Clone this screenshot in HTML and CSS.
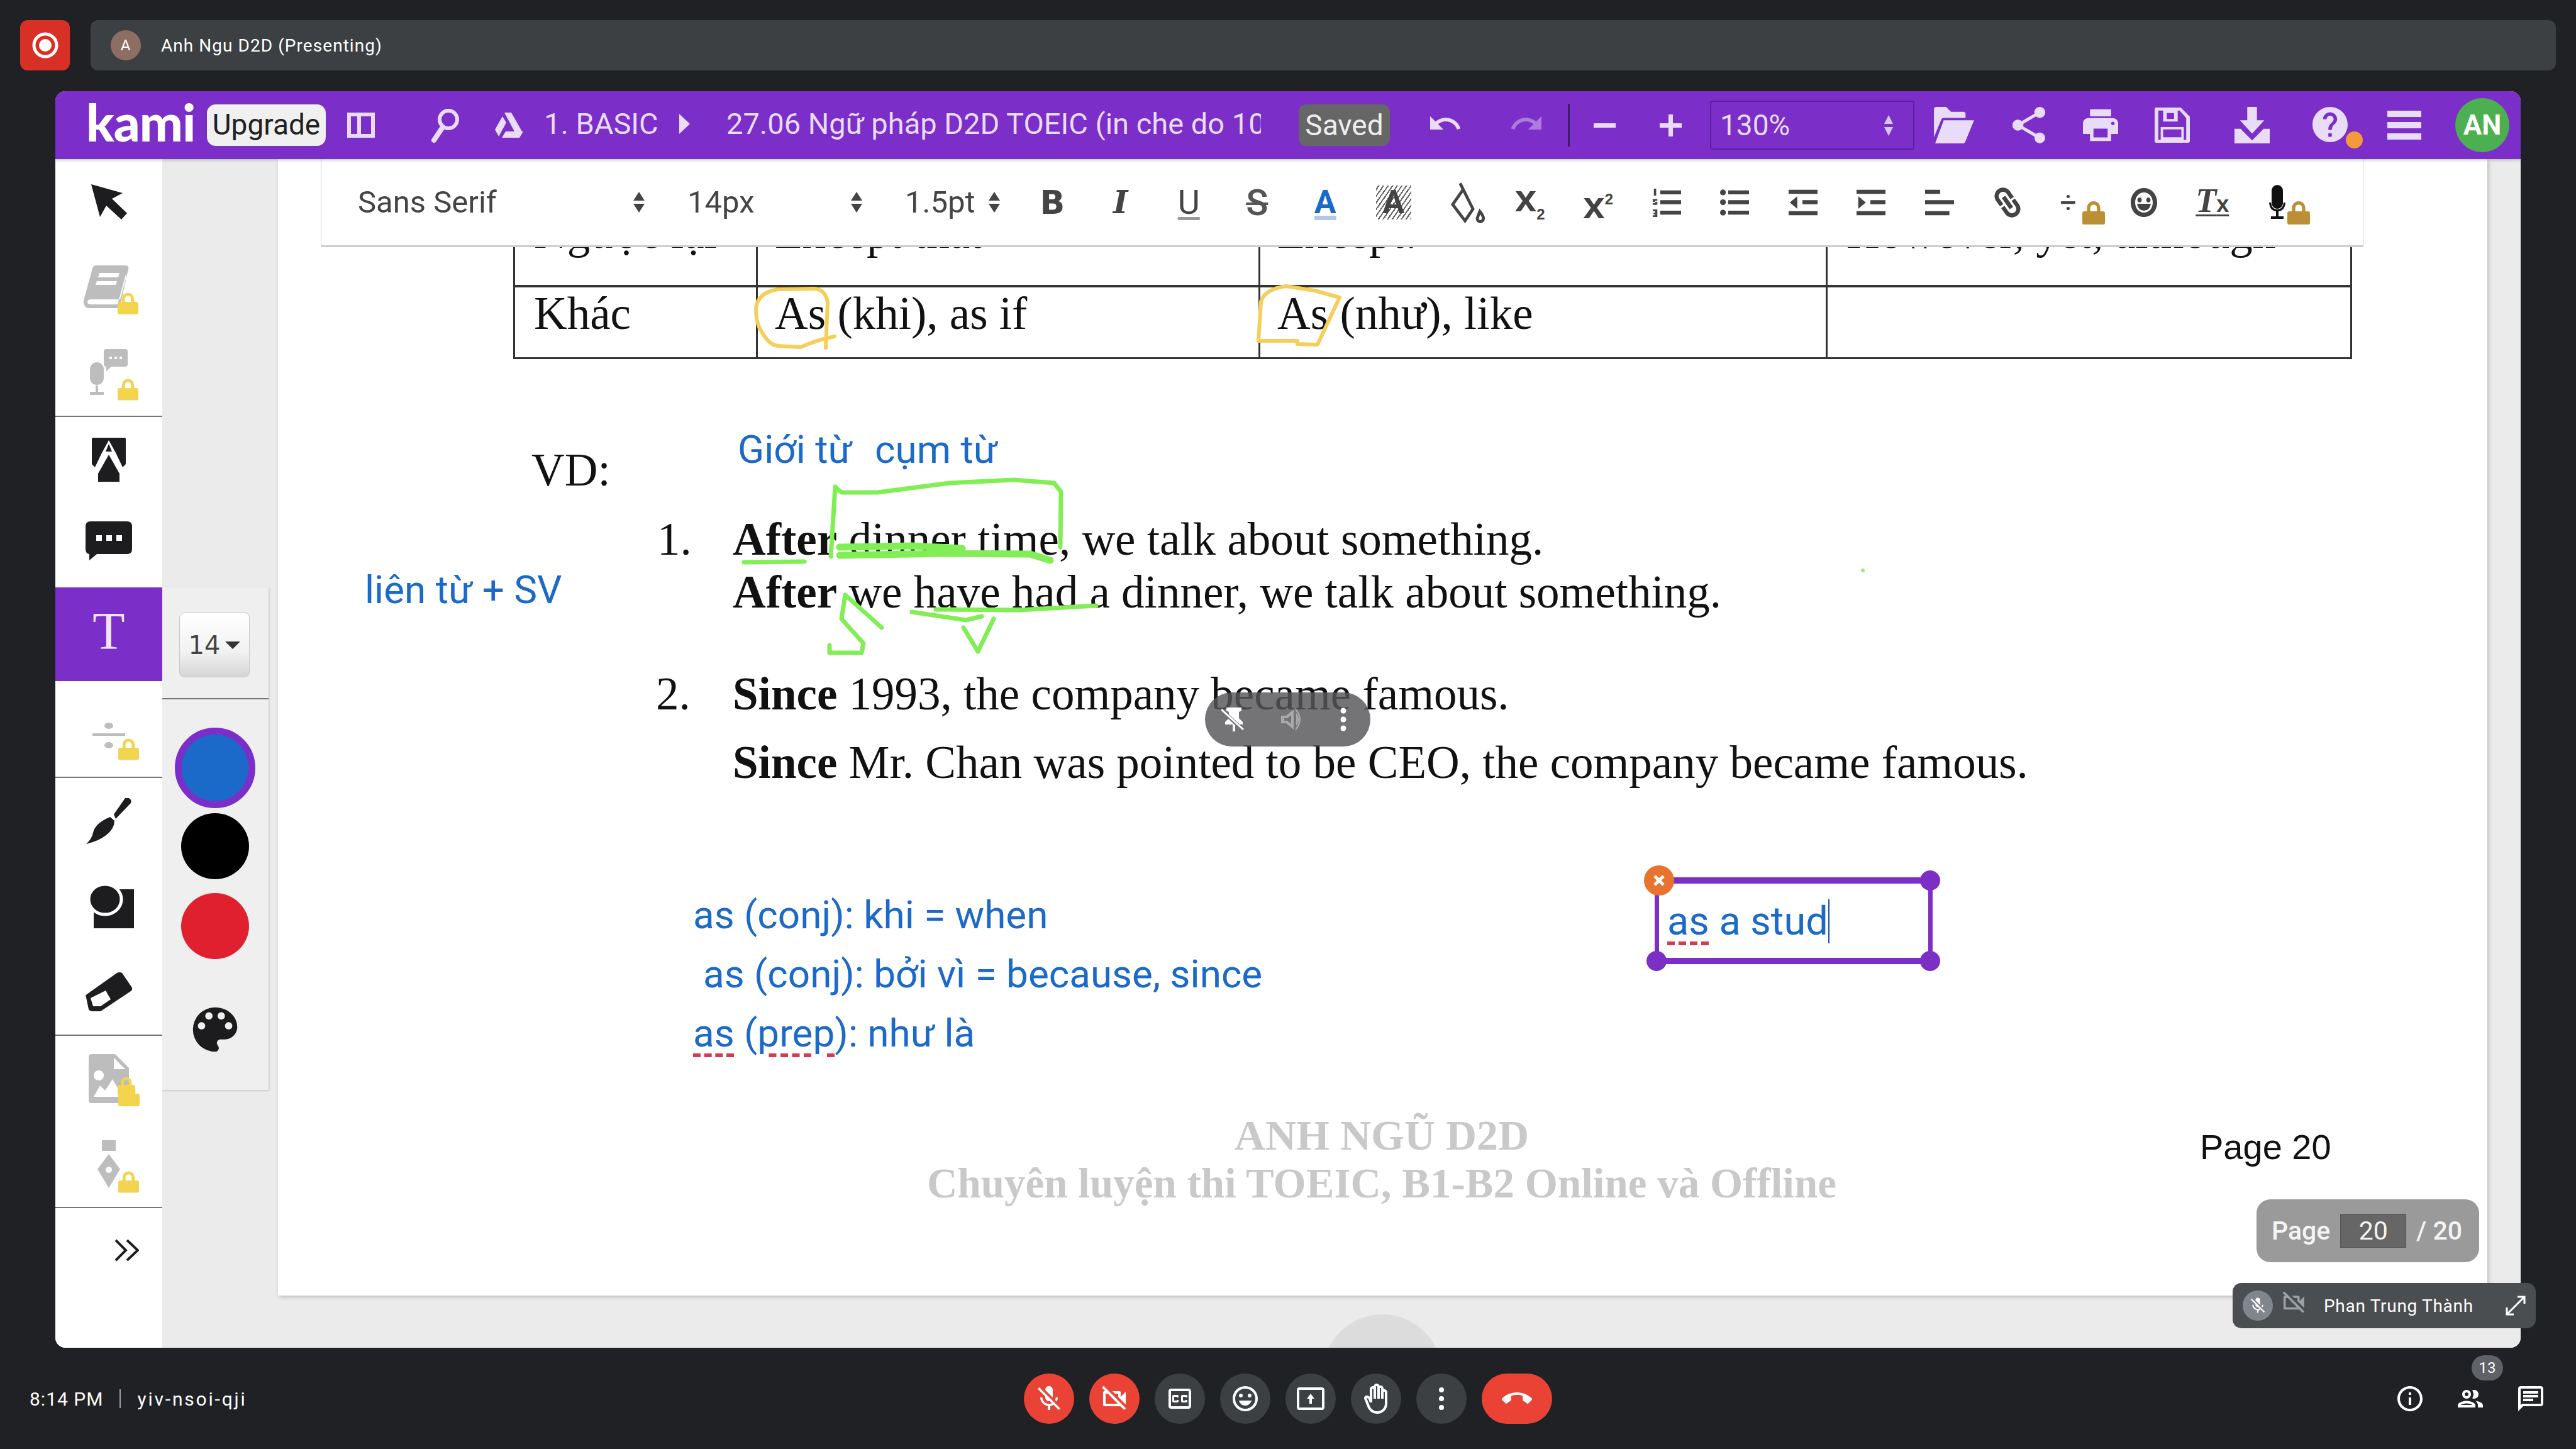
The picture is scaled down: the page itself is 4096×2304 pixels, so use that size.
FILE: index.html
```html
<!DOCTYPE html>
<html>
  <head>
    <meta charset="UTF-8" />
    <title>Meet - yiv-nsoi-qji</title>
    <link rel="stylesheet" href="styles.css">
  </head>
  <body>
    <svg class="defs" width="0" height="0">
      <symbol id="lock" viewBox="0 0 34 36">
        <path d="M3 16h28q3 0 3 3v14q0 3-3 3H3q-3 0-3-3V19q0-3 3-3zM7 17V11a10 10 0 0 1 20 0v6h-5V11a5 5 0 0 0-10 0v6z" />
      </symbol>
      <symbol id="mic-off" viewBox="0 0 24 24">
        <path d="M19 11h-1.7c0 .74-.16 1.43-.43 2.05l1.23 1.23c.56-.98.9-2.09.9-3.28zm-4.02.17c0-.06.02-.11.02-.17V5c0-1.66-1.34-3-3-3S9 3.34 9 5v.18l5.98 5.99zM4.27 3L3 4.27l6.01 6.01V11c0 1.66 1.33 3 2.99 3 .22 0 .44-.03.65-.08l1.66 1.66c-.71.33-1.5.52-2.31.52-2.76 0-5.3-2.1-5.3-5.1H5c0 3.41 2.72 6.23 6 6.72V21h2v-3.28c.91-.13 1.77-.45 2.54-.9L19.73 21 21 19.73 4.27 3z" />
      </symbol>
      <symbol id="cam-off" viewBox="0 0 24 24">
        <path d="M9.56 8l-2-2-4.15-4.14L2 3.27 4.73 6H4c-.55 0-1 .45-1 1v10c0 .55.45 1 1 1h12c.21 0 .39-.08.55-.18L19.73 21l1.41-1.41-8.86-8.86L9.56 8zM5 16V8h1.73l8 8H5zm10-8v2.61l6 6V6.5l-4 4V7c0-.55-.45-1-1-1h-5.61l2 2H15z" />
      </symbol>
    </svg>

    <!-- thanh tren cua Meet -->
    <header class="meet-top">
      <div class="rec">
        <svg width="48" height="48" viewBox="0 0 48 48"><circle cx="24" cy="24" r="18" fill="none" stroke="#fff" stroke-width="5" /><circle cx="24" cy="24" r="10" fill="#fff" /></svg>
      </div>
      <div class="presenting">
        <span class="avatar-a">A</span>
        <span>Anh Ngu D2D (Presenting)</span>
      </div>
    </header>

    <main class="stage">
      <div class="app">
        <!-- thanh tim kami -->
        <div class="kami-bar">
          <span class="kami-logo">kami</span>
          <span class="upgrade">Upgrade</span>
          <svg class="bi bi-panel" viewBox="0 0 48 48"><path d="M2 4h44v40H2zM8 10v28h10V10zM24 10v28h16V10z" fill-rule="evenodd" /></svg>
          <svg class="bi bi-search" viewBox="0 0 46 56"><circle cx="28" cy="19" r="14" fill="none" stroke="currentColor" stroke-width="6" /><path d="M19 31L5 52" stroke="currentColor" stroke-width="8" stroke-linecap="round" /></svg>
          <svg class="bi bi-drive" viewBox="0 0 48 48"><path d="M17 4h11l17 30H33zM14 10l6 10L8 42 2 31zM19 34h28l-6 10H13z" /></svg>
          <span class="crumb">1. BASIC</span>
          <span class="crumb-arrow"></span>
          <span class="doc-title">27.06 Ngữ pháp D2D TOEIC (in che do 100%)</span>
          <span class="saved">Saved</span>
          <svg class="bi bi-undo" viewBox="2 6 22 14"><path d="M12.5 8c-2.65 0-5.05.99-6.9 2.6L2 7v9h9l-3.62-3.62c1.39-1.16 3.16-1.88 5.12-1.88 3.54 0 6.55 2.31 7.6 5.5l2.37-.78C21.08 11.03 17.15 8 12.5 8z" /></svg>
          <svg class="bi bi-redo" viewBox="0 6 22 14"><path d="M18.4 10.6C16.55 8.99 14.15 8 11.5 8c-4.65 0-8.58 3.03-9.96 7.22L3.9 16c1.05-3.19 4.05-5.5 7.6-5.5 1.95 0 3.73.72 5.12 1.88L13 16h9V7z" /></svg>
          <span class="bar-sep"></span>
          <span class="zoom-minus"></span>
          <span class="zoom-plus"></span>
          <div class="zoom-select">
            <span>130%</span>
            <span class="updown updown-pale"><i></i><i></i></span>
          </div>
          <div class="bar-actions">
            <svg class="act act-folder" viewBox="0 0 66 60"><path d="M0 4q0-4 4-4h16l8 8h20q4 0 4 4v6H16q-3 0-4 3L0 50zM16 22h50L52 56q-1 4-5 4H2z" /></svg>
            <svg class="act" viewBox="3 2 18 20"><path d="M18 16.08c-.76 0-1.44.3-1.96.77L8.91 12.7c.05-.23.09-.46.09-.7s-.04-.47-.09-.7l7.05-4.11c.54.5 1.25.81 2.04.81 1.66 0 3-1.34 3-3s-1.34-3-3-3-3 1.34-3 3c0 .24.04.47.09.7L8.04 9.81C7.5 9.31 6.79 9 6 9c-1.66 0-3 1.34-3 3s1.34 3 3 3c.79 0 1.5-.31 2.04-.81l7.12 4.16c-.05.21-.08.43-.08.65 0 1.61 1.31 2.92 2.92 2.92 1.61 0 2.92-1.31 2.92-2.92s-1.31-2.92-2.92-2.92z" /></svg>
            <svg class="act" viewBox="2 2 20 20"><path d="M19 8H5c-1.66 0-3 1.34-3 3v6h4v4h12v-4h4v-6c0-1.66-1.34-3-3-3zm-3 11H8v-5h8v5zm3-7c-.55 0-1-.45-1-1s.45-1 1-1 1 .45 1 1-.45 1-1 1zm-1-9H6v4h12V3z" fill-rule="evenodd" /></svg>
            <svg class="act" viewBox="0 0 58 58"><path d="M3 0h40l15 15v40q0 3-3 3H3q-3 0-3-3V3q0-3 3-3zM6 5v48h46V17L41 5zM14 5h24v18H14zM20 9v10h12V9zM10 32h38v21H10zM14 36v13h30V36z" fill-rule="evenodd" /></svg>
            <svg class="act act-dl" viewBox="0 0 58 60"><path d="M21 0h16v22h12L29 44 9 22h12zM0 36h10l19 19 19-19h10v24H0z" /></svg>
            <span class="act act-help">
              <svg viewBox="2 2 20 20"><path d="M12 2C6.48 2 2 6.48 2 12s4.48 10 10 10 10-4.48 10-10S17.52 2 12 2zm1 17h-2v-2h2v2zm2.07-7.75l-.9.92C13.45 12.9 13 13.5 13 15h-2v-.5c0-1.1.45-2.1 1.17-2.83l1.24-1.26c.37-.36.59-.86.59-1.41 0-1.1-.9-2-2-2s-2 .9-2 2H8c0-2.21 1.79-4 4-4s4 1.79 4 4c0 .88-.36 1.68-.93 2.25z" /></svg>
              <i class="help-dot"></i>
            </span>
            <svg class="act act-menu" viewBox="0 0 54 46"><path d="M0 0h54v10H0zM0 18h54v10H0zM0 36h54v10H0z" /></svg>
            <span class="user">AN</span>
          </div>
        </div>

        <div class="kami-body">
          <!-- cot cong cu -->
          <nav class="tools">
            <div class="tool-group">
              <div class="tool"><svg class="t-cursor" viewBox="0 0 57 57"><path d="M0 0l50 14-17 9 24 23-9 10-24-22-10 18z" /></svg></div>
              <div class="tool muted">
                <span class="locked">
                  <svg class="t-book" viewBox="0 0 80 70"><path d="M20 0h46q7 0 5 7L58 54H12q-6 0-6 4t6 4h42l13-48v10l-9 40q-1 4-5 4H10q-10 0-10-10 0-3 1-6L14 5q1-5 6-5zM25 12l-2 7h32l2-7zM21 25l-2 6h32l2-6z" fill-rule="evenodd" /></svg>
                  <svg class="lock lock-a"><use href="#lock" /></svg>
                </span>
              </div>
              <div class="tool muted">
                <span class="locked">
                  <svg class="t-voice" viewBox="0 0 60 76"><path d="M26 0h30q4 0 4 4v20q0 4-4 4H34l-8 7v-7q-4 0-4-4V4q0-4 4-4zM31 12v4h4v-4zM39 12v4h4v-4zM47 12v4h4v-4zM0 32a11 11 0 0 1 22 0v14a11 11 0 0 1-22 0zM9 58h4v10h9v5H0v-5h9z" fill-rule="evenodd" /></svg>
                  <svg class="lock lock-v"><use href="#lock" /></svg>
                </span>
              </div>
            </div>
            <div class="tool-group">
              <div class="tool"><svg class="t-stamp" viewBox="0 0 54 70"><path d="M2 0h50q2 0 2 2v40l-5 5-11-23-11-20-11 20L5 47l-5-5V2q0-2 2-2zM27 10l5 12H22zM27 27l17 30v13H10V57z" /></svg></div>
              <div class="tool tool-note"><svg class="t-note" viewBox="0 0 74 72"><path d="M8 0h58q8 0 8 8v36q0 8-8 8H18L6 62v-10q-6-1-6-8V8q0-8 8-8zM17 22v9h9v-9zM33 22v9h9v-9zM49 22v9h9v-9z" fill-rule="evenodd" /></svg></div>
              <div class="tool tool-active"><span class="t-text">T</span></div>
              <div class="tool tool-tall muted">
                <span class="locked">
                  <svg class="t-frac" viewBox="0 0 52 42"><path d="M0 17h52v4H0z" /><ellipse cx="26" cy="5" rx="7" ry="5" /><ellipse cx="26" cy="36" rx="7" ry="5" /></svg>
                  <svg class="lock lock-b"><use href="#lock" /></svg>
                </span>
              </div>
            </div>
            <div class="tool-group">
              <div class="tool"><svg class="t-brush" viewBox="0 0 72 73"><path d="M44 26L62 0q6-2 9 3 2 4-2 7L47 33zM38 30l7 6q0 12-12 22-12 10-33 15 9-8 11-18 3-15 27-25z" /></svg></div>
              <div class="tool"><svg class="t-shape" viewBox="0 0 72 70"><path d="M24 8h48v62H8V30z" /><ellipse cx="26" cy="24" rx="26" ry="24" stroke="#fff" stroke-width="5" /></svg></div>
              <div class="tool"><svg class="t-eraser" viewBox="0 0 75 63"><path d="M50 1q4-2 8 0l15 22q3 4-1 7L27 60q-2 2-5 2H10q-3 0-5-3L1 40q-2-3 1-5zM8 41l4 13h12l16-11-8-14z" fill-rule="evenodd" /></svg></div>
            </div>
            <div class="tool-group">
              <div class="tool tool-wide muted">
                <span class="locked">
                  <svg class="t-image" viewBox="0 0 64 78"><path d="M4 0h38l22 22v52q0 4-4 4H4q-4 0-4-4V4q0-4 4-4zM40 6v18h18zM16 26a8 8 0 1 0 .1 0zM8 68h46L38 40 26 58l-8-8z" fill-rule="evenodd" /></svg>
                  <svg class="lock lock-c"><use href="#lock" /></svg>
                  <svg class="lock lock-c2"><use href="#lock" /></svg>
                </span>
              </div>
              <div class="tool tool-wide muted">
                <span class="locked">
                  <svg class="t-pen" viewBox="0 0 36 76"><path d="M7 0h22v17H7zM18 22l18 24-18 30L0 46zM18 42a5 5 0 1 0 .1 0z" fill-rule="evenodd" /></svg>
                  <svg class="lock lock-p"><use href="#lock" /></svg>
                </span>
              </div>
            </div>
            <div class="tool tool-more">
              <svg viewBox="0 0 38 36" width="38" height="36" fill="none" stroke="currentColor" stroke-width="4"><path d="M1 2l16 16L1 34M19 2l17 16-17 16" /></svg>
            </div>
          </nav>

          <div class="viewer">
            <!-- trang tai lieu -->
            <div class="doc-page">
              <table class="doc-table">
                <tr class="row-cut">
                  <td>Ngược lại</td>
                  <td>Except that</td>
                  <td>Except:</td>
                  <td>However, yet, although</td>
                </tr>
                <tr>
                  <td>Khác</td>
                  <td>As (khi), as if</td>
                  <td>As (như), like</td>
                  <td></td>
                </tr>
              </table>

              <div class="ln l-vd">VD:</div>
              <div class="ln l-n1">1.</div>
              <div class="ln l-a1"><b>After</b> dinner time, we talk about something.</div>
              <div class="ln l-a2"><b>After</b> we have had a dinner, we talk about something.</div>
              <div class="ln l-n2">2.</div>
              <div class="ln l-s1"><b>Since</b> 1993, the company became famous.</div>
              <div class="ln l-s2"><b>Since</b> Mr. Chan was pointed to be CEO, the company became famous.</div>

              <div class="note n-gioi">Giới từ</div>
              <div class="note n-cum">cụm từ</div>
              <div class="note n-lien">liên từ + SV</div>
              <div class="note n-as1">as (conj): khi = when</div>
              <div class="note n-as2">as (conj): bởi vì = because, since</div>
              <div class="note n-as3"><span class="typo">as</span> (<span class="typo">prep</span>): như là</div>

              <div class="watermark">
                <div>ANH NGŨ D2D</div>
                <div class="wm-sub">Chuyên luyện thi TOEIC, B1-B2 Online và Offline</div>
              </div>
              <div class="page-no">Page 20</div>

              <svg class="ink" viewBox="442 253 3513 1807">
                <g class="ink-yellow">
                  <path d="M1313 553L1316 480Q1312 460 1295 459L1237 460Q1205 465 1202 490Q1202 515 1211 527Q1222 548 1237 550L1273 552Q1300 540 1327 535" />
                  <path d="M2045 455L2090 462L2130 473L2095 548L2063 547L2063 542L2001 542L2005 480Q2010 460 2045 455" />
                </g>
                <g class="ink-green">
                  <path d="M1321 885L1328 774L1338 783H1395L1510 768L1612 763L1676 768L1687 782L1686 870" />
                  <path class="ink-thick" d="M1335 870L1450 868L1530 872M1335 883L1500 880L1638 881L1670 891" />
                  <path d="M1183 894L1279 893" />
                  <path d="M1450 973L1536 986L1561 980M1488 969L1620 970L1743 963" />
                  <path d="M1402 998L1344 946L1338 984L1373 1023L1370 1038H1319V1026" />
                  <path d="M1532 998L1555 1036L1580 984" />
                </g>
                <circle cx="2962" cy="907" r="3" fill="#9fe87e" />
              </svg>

              <!-- o nhap chu dang go -->
              <div class="text-box">
                <span class="box-text"><span class="typo">as</span> a stud</span><span class="caret"></span>
                <span class="box-close">
                  <svg viewBox="0 0 20 20" width="20" height="20"><path d="M3 3l14 14M17 3L3 17" stroke="#fff" stroke-width="5" /></svg>
                </span>
                <i class="handle h-tr"></i>
                <i class="handle h-bl"></i>
                <i class="handle h-br"></i>
              </div>
            </div>

            <!-- thanh dinh dang -->
            <div class="format-bar">
              <div class="sel sel-font"><span>Sans Serif</span><span class="updown"><i></i><i></i></span></div>
              <div class="sel sel-size"><span>14px</span><span class="updown"><i></i><i></i></span></div>
              <div class="sel sel-line"><span>1.5pt</span><span class="updown"><i></i><i></i></span></div>
              <span class="fmt f-b">B</span>
              <span class="fmt f-i">I</span>
              <span class="fmt f-u">U</span>
              <span class="fmt f-s">S</span>
              <span class="fmt f-a">A</span>
              <span class="fmt f-hatch">A</span>
              <span class="fmt"><svg class="f-fill" viewBox="0 0 70 84" fill="none" stroke="currentColor" stroke-width="6"><path d="M18 3l26 52-16 24L3 46 24 16M58 60q10 12 6 18-3 4-8 2-5-3-2-10z" /></svg></span>
              <span class="fmt f-sub f-sub-low"><span>x<sub>2</sub></span></span>
              <span class="fmt f-sub"><span>x<sup>2</sup></span></span>
              <span class="fmt"><svg class="f-list" viewBox="0 0 50 50"><path d="M14 4h36v7H14zM14 21h36v7H14zM14 39h36v7H14zM3 1h4v12H3zM1 19h8v3H5v2h4v5H1v-3h4v-2H1zM1 37h8v13H1v-3h4v-2H2v-2h3v-3H1z" /></svg></span>
              <span class="fmt"><svg class="f-list" viewBox="0 0 50 50"><path d="M14 4h36v7H14zM14 21h36v7H14zM14 39h36v7H14z" /><circle cx="5" cy="7.500" r="5" /><circle cx="5" cy="24.500" r="5" /><circle cx="5" cy="42.500" r="5" /></svg></span>
              <span class="fmt"><svg class="f-list" viewBox="0 0 50 50"><path d="M0 3h50v7H0zM24 21h26v7H24zM0 40h50v7H0zM15 14v22L2 25z" /></svg></span>
              <span class="fmt"><svg class="f-list" viewBox="0 0 50 50"><path d="M0 3h50v7H0zM24 21h26v7H24zM0 40h50v7H0zM3 14v22l13-11z" /></svg></span>
              <span class="fmt"><svg class="f-list" viewBox="0 0 50 50"><path d="M0 3h26v7H0zM0 21h50v7H0zM0 40h42v7H0z" /></svg></span>
              <span class="fmt"><svg class="f-link" viewBox="0 0 24 24"><path d="M3.900 12c0-1.710 1.390-3.100 3.100-3.100h4V7H7c-2.760 0-5 2.240-5 5s2.240 5 5 5h4v-1.900H7c-1.710 0-3.100-1.390-3.100-3.100zM8 13h8v-2H8v2zm9-6h-4v1.900h4c1.710 0 3.100 1.390 3.100 3.100s-1.390 3.100-3.100 3.100h-4V17h4c2.760 0 5-2.240 5-5s-2.240-5-5-5z" stroke="currentColor" stroke-width=".7" /></svg></span>
              <span class="fmt f-div">÷<svg class="lock lock-d"><use href="#lock" /></svg></span>
              <span class="fmt"><svg class="f-smile" viewBox="0 0 44 48"><path d="M22 1C10 1 1 11 1 24s9 23 21 23 21-10 21-23S34 1 22 1zm0 39c-8 0-14-7-14-16S14 8 22 8s14 7 14 16-6 16-14 16zM15 16a3.500 4 0 1 0 .1 0zM29 16a3.500 4 0 1 0 .1 0zM11 26h22q-2 11-11 11T11 26z" fill-rule="evenodd" /></svg></span>
              <span class="fmt f-clear"><span>T<small>x</small></span></span>
              <span class="fmt f-mic">
                <svg class="f-micico" viewBox="0 0 28 56"><path d="M14 0a9 9 0 0 1 9 9v20a9 9 0 0 1-18 0V9a9 9 0 0 1 9-9zM1 28h3q1 11 10 11t10-11h3q-1 13-11 14v8h8v4H4v-4h8v-8Q2 41 1 28z" /></svg>
                <svg class="lock lock-d"><use href="#lock" /></svg>
              </span>
            </div>

            <!-- bang mau cua cong cu text -->
            <div class="text-panel">
              <div class="panel-size">
                <span class="size-drop">14<i></i></span>
              </div>
              <div class="panel-colors">
                <span class="dot dot-on"></span>
                <span class="dot dot-black"></span>
                <span class="dot dot-red"></span>
                <svg class="palette" viewBox="0 0 24 24"><path d="M12 3a9 9 0 0 0 0 18c.83 0 1.500-.67 1.500-1.500 0-.39-.15-.74-.39-1.010-.23-.26-.38-.61-.38-.99 0-.83.67-1.500 1.500-1.500H16c2.760 0 5-2.240 5-5 0-4.420-4.030-8-9-8zm-5.500 9a1.500 1.500 0 1 1 0-3 1.500 1.500 0 0 1 0 3zm3-4a1.500 1.500 0 1 1 0-3 1.500 1.500 0 0 1 0 3zm5 0a1.500 1.500 0 1 1 0-3 1.500 1.500 0 0 1 0 3zm3 4a1.500 1.500 0 1 1 0-3 1.500 1.500 0 0 1 0 3z" fill-rule="evenodd" /></svg>
              </div>
            </div>

            <div class="audio-pill">
              <svg viewBox="0 0 36 38" width="36" height="38"><path d="M8 0h24v5l-4 2v10l6 6v4H22v11h-4V27H6v-4l6-6V7L8 5z" fill="#fff" /><path d="M0 4l35 32" stroke="#76767a" stroke-width="6" /><path d="M0 3l35 32" stroke="#fff" stroke-width="3" /></svg>
              <svg class="pill-dim" viewBox="0 0 36 36" width="36" height="36"><path d="M0 12h8L20 2v32L8 24H0zM5 16v4h5l6 5V11l-6 5zM24 8q8 10 0 20zM23 0q16 18 0 36v-4q11-14 0-28z" fill-rule="evenodd" /></svg>
              <svg viewBox="0 0 10 38" width="10" height="38"><circle cx="5" cy="5" r="4.500" /><circle cx="5" cy="19" r="4.500" /><circle cx="5" cy="33" r="4.500" /></svg>
            </div>

            <div class="page-pill">
              <span>Page</span>
              <span class="page-input">20</span>
              <span>/ 20</span>
            </div>

            <div class="blob"></div>
          </div>
        </div>
      </div>

      <!-- khung nguoi trinh bay -->
      <div class="tile">
        <span class="tile-mic"><svg viewBox="0 0 24 24" width="30" height="30"><use href="#mic-off" /></svg></span>
        <svg class="tile-cam" viewBox="2 2 19 19" width="44" height="44"><use href="#cam-off" /></svg>
        <span class="tile-name">Phan Trung Thành</span>
        <svg class="tile-full" viewBox="0 0 32 32" width="32" height="32" fill="none" stroke="#fff" stroke-width="3"><path d="M19 2h11v11M30 2L2 30M2 19v11h11" /></svg>
      </div>
    </main>

    <!-- thanh duoi cua Meet -->
    <footer class="meet-bottom">
      <div class="meeting-info">
        <span>8:14 PM</span>
        <span class="info-sep"></span>
        <span class="meeting-code">yiv-nsoi-qji</span>
      </div>
      <div class="controls">
        <span class="ctl ctl-red"><svg viewBox="0 0 24 24"><use href="#mic-off" /></svg></span>
        <span class="ctl ctl-red"><svg viewBox="0 0 24 24"><use href="#cam-off" /></svg></span>
        <span class="ctl"><svg viewBox="0 0 24 24"><path d="M19 4H5c-1.110 0-2 .9-2 2v12c0 1.100.89 2 2 2h14c1.100 0 2-.9 2-2V6c0-1.100-.9-2-2-2zm0 14H5V6h14v12zM7 15h3c.55 0 1-.45 1-1v-1H9.500v.5h-2v-3h2v.5H11v-1c0-.55-.45-1-1-1H7c-.55 0-1 .45-1 1v4c0 .55.45 1 1 1zm7 0h3c.55 0 1-.45 1-1v-1h-1.500v.5h-2v-3h2v.5H18v-1c0-.55-.45-1-1-1h-3c-.55 0-1 .45-1 1v4c0 .55.45 1 1 1z" /></svg></span>
        <span class="ctl"><svg viewBox="0 0 24 24"><path d="M12 2a10 10 0 1 0 0 20 10 10 0 0 0 0-20zm0 18a8 8 0 1 1 0-16 8 8 0 0 1 0 16zM8.500 8a1.500 1.500 0 1 0 0 3 1.500 1.500 0 0 0 0-3zm7 0a1.500 1.500 0 1 0 0 3 1.500 1.500 0 0 0 0-3zM7 13.500h10c-.6 2.300-2.600 4-5 4s-4.400-1.700-5-4z" fill-rule="evenodd" /></svg></span>
        <span class="ctl"><svg viewBox="0 0 24 24"><path d="M21 3H3c-1.110 0-2 .89-2 2v14c0 1.110.89 2 2 2h18c1.110 0 2-.89 2-2V5c0-1.110-.89-2-2-2zm0 16.020H3V4.980h18v14.040zM11 12H9l3-4 3 4h-2v4h-2v-4z" /></svg></span>
        <span class="ctl"><svg viewBox="0 0 24 24"><path d="M21 7c0-1.380-1.120-2.500-2.500-2.500-.17 0-.34.02-.5.05V4c0-1.380-1.120-2.500-2.500-2.500-.23 0-.46.03-.67.09C14.460.66 13.560 0 12.500 0c-1.230 0-2.250.89-2.460 2.060C9.870 2.020 9.690 2 9.500 2 8.120 2 7 3.120 7 4.500v5.890c-.34-.31-.76-.54-1.220-.66L5 9.520c-.83-.23-1.700.09-2.190.83-.38.57-.4 1.310-.15 1.950l2.560 6.430C6.490 21.910 9.570 24 13 24c4.420 0 8-3.580 8-8V7zm-2 9c0 3.310-2.690 6-6 6-2.610 0-4.950-1.590-5.910-4.010l-2.600-6.540.53.14c.46.12.83.46 1 .9L7 15h2V4.500c0-.28.22-.5.5-.5s.5.22.5.5V12h2V2.500c0-.28.22-.5.5-.5s.5.22.5.5V12h2V4c0-.28.22-.5.5-.5s.5.22.5.5v8h2V7c0-.28.22-.5.5-.5s.5.22.5.5v9z" /></svg></span>
        <span class="ctl"><svg viewBox="0 0 24 24"><circle cx="12" cy="5" r="2" /><circle cx="12" cy="12" r="2" /><circle cx="12" cy="19" r="2" /></svg></span>
        <span class="ctl ctl-end"><svg viewBox="0 0 24 24"><path d="M12 9c-1.600 0-3.150.25-4.600.72v3.100c0 .39-.23.74-.56.9-.98.49-1.870 1.120-2.660 1.850-.18.18-.43.28-.7.28-.28 0-.53-.11-.71-.29L.29 13.080c-.18-.17-.29-.42-.29-.7 0-.28.11-.53.29-.71C3.340 8.780 7.460 7 12 7s8.660 1.780 11.710 4.670c.18.18.29.43.29.71 0 .28-.11.53-.29.71l-2.480 2.480c-.18.18-.43.29-.71.29-.27 0-.52-.11-.7-.28-.79-.74-1.690-1.360-2.670-1.850-.33-.16-.56-.5-.56-.9v-3.100C15.150 9.250 13.600 9 12 9z" /></svg></span>
      </div>
      <div class="side-actions">
        <svg class="side-ico" viewBox="0 0 24 24"><path d="M11 7h2v2h-2zm0 4h2v6h-2zm1-9C6.480 2 2 6.480 2 12s4.480 10 10 10 10-4.480 10-10S17.520 2 12 2zm0 18c-4.410 0-8-3.590-8-8s3.590-8 8-8 8 3.590 8 8-3.590 8-8 8z" /></svg>
        <span class="people">
          <svg class="side-ico" viewBox="0 0 24 24"><path d="M9 13.750c-2.340 0-7 1.170-7 3.500V19h14v-1.750c0-2.330-4.660-3.500-7-3.500zM4.340 17c.84-.58 2.870-1.250 4.660-1.250s3.820.67 4.660 1.250H4.340zM9 12c1.930 0 3.500-1.570 3.500-3.500S10.930 5 9 5 5.500 6.570 5.500 8.500 7.070 12 9 12zm0-5c.83 0 1.500.67 1.500 1.500S9.830 10 9 10s-1.500-.67-1.500-1.500S8.170 7 9 7zm7.040 6.810c1.160.84 1.960 1.960 1.960 3.440V19h4v-1.750c0-2.020-3.500-3.170-5.960-3.440zM15 12c1.930 0 3.500-1.570 3.500-3.500S16.930 5 15 5c-.54 0-1.040.13-1.500.35.63.89 1 1.980 1 3.150s-.37 2.260-1 3.150c.46.22.96.35 1.500.35z" /></svg>
          <span class="people-count">13</span>
        </span>
        <svg class="side-ico" viewBox="0 0 24 24"><path d="M20 2H4c-1.100 0-2 .9-2 2v18l4-4h14c1.100 0 2-.9 2-2V4c0-1.100-.9-2-2-2zm0 14H5.170L4 17.170V4h16v12zM6 12h8v2H6zM6 9h12v2H6zM6 6h12v2H6z" /></svg>
      </div>
    </footer>
  </body>
</html>
```

FILE: styles.css
```css
body {
  margin: 0;
  width: 4096px;
  height: 2304px;
  overflow: hidden;
  display: flex;
  flex-direction: column;
  background: #202124;
  color: #fff;
  font-family: Roboto, "Liberation Sans", sans-serif;
}
.defs {
  position: absolute;
}
svg:not([fill]) {
  fill: currentColor;
}
svg {
  flex: none;
}

/* meet top */
.meet-top {
  height: 145px;
  box-sizing: border-box;
  padding: 32px 32px 0;
  display: flex;
  gap: 33px;
  align-items: flex-start;
}
.rec {
  width: 79px;
  height: 80px;
  background: #d93025;
  border-radius: 12px;
  display: flex;
  align-items: center;
  justify-content: center;
}
.presenting {
  flex: 1;
  height: 80px;
  background: #3c4043;
  border-radius: 12px;
  padding-left: 32px;
  display: flex;
  align-items: center;
  gap: 32px;
  font-size: 28px;
  letter-spacing: 1.05px;
}
.avatar-a {
  width: 48px;
  height: 48px;
  border-radius: 50%;
  background: #8d6e63;
  display: flex;
  align-items: center;
  justify-content: center;
  font-size: 24px;
}

/* stage + app */
.stage {
  position: relative;
  height: 1998px;
  flex: none;
}
.app {
  margin: 0 88px;
  height: 100%;
  display: flex;
  flex-direction: column;
  background: #ebebeb;
  border-radius: 16px;
  overflow: hidden;
}

/* kami bar */
.kami-bar {
  height: 108px;
  flex: none;
  background: #7c2ec8;
  color: #e8dcf8;
  display: flex;
  align-items: center;
  padding-left: 49px;
  font-family: Roboto, sans-serif;
  box-shadow: 0 2px 4px rgba(0, 0, 0, 0.2);
  position: relative;
  z-index: 3;
}
.kami-logo {
  width: 171px;
  font-family: Lato, sans-serif;
  font-weight: 900;
  font-size: 82px;
  line-height: 82px;
  letter-spacing: -1px;
  color: #fff;
  margin-top: -12px;
}
.upgrade {
  margin-left: 21px;
  width: 189px;
  height: 66px;
  background: #f0f0f0;
  color: #222;
  border-radius: 14px;
  display: flex;
  align-items: center;
  justify-content: center;
  font-size: 46px;
  padding-bottom: 3px;
  box-sizing: border-box;
}
.bi {
  height: 48px;
}
.bi-panel {
  width: 48px;
  margin-left: 32px;
}
.bi-search {
  width: 46px;
  height: 56px;
  margin-left: 87px;
}
.bi-drive {
  margin-left: 54px;
  width: 48px;
}
.crumb {
  margin-left: 32px;
  margin-top: -5px;
  width: 182px;
  font-size: 47px;
  white-space: nowrap;
}
.crumb-arrow {
  margin-left: 33px;
  margin-top: -5px;
  border-left: 17px solid #e8dcf8;
  border-top: 16px solid transparent;
  border-bottom: 16px solid transparent;
}
.doc-title {
  margin-left: 58px;
  margin-top: -5px;
  width: 850px;
  overflow: hidden;
  white-space: nowrap;
  font-size: 47px;
}
.saved {
  margin-left: 60px;
  width: 145px;
  height: 66px;
  background: #666;
  color: #eee;
  border-radius: 12px;
  display: flex;
  align-items: center;
  justify-content: center;
  font-size: 46px;
}
.bi-undo {
  width: 52px;
  height: 34px;
  margin-left: 64px;
}
.bi-redo {
  width: 52px;
  height: 34px;
  margin-left: 73px;
  opacity: 0.45;
}
.bar-sep {
  width: 3px;
  height: 68px;
  margin-left: 42px;
  background: #3c1a6b;
}
.zoom-minus {
  margin-left: 38px;
  width: 35px;
  height: 7px;
  background: #e8dcf8;
}
.zoom-plus {
  margin-left: 70px;
  width: 35px;
  height: 35px;
  background:
    linear-gradient(#e8dcf8, #e8dcf8) center / 100% 7px no-repeat,
    linear-gradient(#e8dcf8, #e8dcf8) center / 7px 100% no-repeat;
}
.zoom-select {
  margin-left: 45px;
  width: 325px;
  height: 78px;
  box-sizing: border-box;
  border: 2px solid #5a1ea0;
  border-radius: 4px;
  padding: 0 32px 0 14px;
  display: flex;
  align-items: center;
  justify-content: space-between;
  font-size: 46px;
}
.updown {
  display: flex;
  flex-direction: column;
  gap: 5px;
  color: #444;
}
.updown i {
  display: block;
  border-left: 9px solid transparent;
  border-right: 9px solid transparent;
}
.updown i:first-child {
  border-bottom: 14px solid currentColor;
}
.updown i:last-child {
  border-top: 14px solid currentColor;
}
.updown-pale {
  color: #d8c6f2;
}
.updown-pale i {
  border-left-width: 7px;
  border-right-width: 7px;
}
.bar-actions {
  display: flex;
  align-items: center;
}
.act {
  width: 56px;
  height: 58px;
  margin-left: 58px;
  position: relative;
  display: block;
}
.act-folder {
  margin-left: 30px;
  width: 66px;
}
.act-dl {
  margin-left: 71px;
}
.act-help {
  margin-left: 68px;
}
.act-help svg {
  width: 56px;
  height: 56px;
  display: block;
}
.help-dot {
  position: absolute;
  right: -24px;
  bottom: -8px;
  width: 27px;
  height: 27px;
  border-radius: 50%;
  background: #f39a3a;
}
.act-menu {
  margin-left: 63px;
  width: 54px;
  height: 46px;
}
.user {
  margin-left: 54px;
  width: 86px;
  height: 86px;
  border-radius: 50%;
  background: #4caf50;
  color: #fff;
  font-size: 44px;
  font-weight: bold;
  display: flex;
  align-items: center;
  justify-content: center;
}

/* body */
.kami-body {
  flex: 1;
  display: flex;
  min-height: 0;
}
.tools {
  width: 170px;
  flex: none;
  background: #fff;
  color: #1d1d1f;
  display: flex;
  flex-direction: column;
  border-right: 1px solid #ccc;
  box-sizing: content-box;
  margin-right: -1px;
}
.tool-group {
  border-bottom: 2px solid #777;
}
.tool {
  height: 136px;
  display: flex;
  align-items: center;
  justify-content: center;
}
.tool-note {
  height: 135px;
  padding-bottom: 4px;
  box-sizing: border-box;
}
.tool-active {
  height: 149px;
  background: #7c2ec8;
  color: #f0e4ff;
  padding-bottom: 10px;
  box-sizing: border-box;
}
.tool-tall {
  height: 152px;
  padding-top: 22px;
  box-sizing: border-box;
}
.tool-wide {
  height: 136px;
}
.tool-more {
  padding: 0 0 2px 58px;
  box-sizing: border-box;
}
.muted {
  color: #bdbdbd;
}
.locked {
  position: relative;
  display: block;
  line-height: 0;
}
.lock {
  position: absolute;
  width: 33px;
  height: 36px;
  color: #f3d44f;
}
.lock-a {
  right: -7px;
  bottom: -8px;
}
.lock-v {
  right: -17px;
  bottom: -6px;
}
.lock-b {
  right: -22px;
  bottom: -18px;
}
.lock-c {
  right: -18px;
  bottom: -5px;
  width: 36px;
  height: 36px;
}
.lock-c2 {
  right: -14px;
  bottom: 12px;
  width: 36px;
  height: 30px;
}
.lock-p {
  right: -30px;
  bottom: -8px;
}
.lock-d {
  right: 8px;
  bottom: 8px;
  width: 36px;
  height: 42px;
  color: #bd8f34;
}
.t-cursor {
  width: 57px;
  height: 57px;
}
.t-book {
  width: 80px;
  height: 70px;
}
.t-voice {
  width: 60px;
  height: 76px;
}
.t-stamp {
  width: 54px;
  height: 70px;
}
.t-note {
  width: 74px;
  height: 72px;
}
.t-text {
  font-family: "Liberation Serif", serif;
  font-size: 84px;
  line-height: 84px;
}
.t-frac {
  width: 52px;
  height: 42px;
}
.t-brush {
  width: 72px;
  height: 73px;
}
.t-shape {
  width: 72px;
  height: 70px;
  margin-left: 8px;
}
.t-eraser {
  width: 75px;
  height: 63px;
}
.t-image {
  width: 64px;
  height: 78px;
}
.t-pen {
  width: 36px;
  height: 76px;
}

/* viewer */
.viewer {
  flex: 1;
  position: relative;
  overflow: hidden;
  background: #ebebeb;
}
.doc-page {
  margin-left: 184px;
  width: 3513px;
  height: 1807px;
  background: #fff;
  box-shadow: 2px 2px 6px rgba(0, 0, 0, 0.22);
  position: relative;
  color: #111;
  font-family: "Liberation Serif", serif;
  font-size: 73px;
}
.doc-table {
  position: absolute;
  left: 374px;
  top: 76px;
  width: 2924px;
  table-layout: fixed;
  border-collapse: collapse;
  font-size: 73px;
  line-height: 84px;
}
.doc-table td {
  border: 3px solid #333;
  border-top-width: 4px;
  height: 114px;
  padding: 0 0 0 30px;
  box-sizing: border-box;
  vertical-align: top;
  white-space: nowrap;
}
.doc-table td:first-child {
  width: 386px;
}
.doc-table td:nth-child(2) {
  width: 799px;
  padding-left: 27px;
}
.doc-table td:nth-child(3) {
  width: 902px;
  padding-left: 27px;
}
.doc-table .row-cut td {
  height: 124px;
  line-height: 74px;
}
.ln {
  position: absolute;
  line-height: 80px;
  white-space: nowrap;
}
.l-vd { left: 403px; top: 455px; }
.l-n1 { left: 603px; top: 565px; }
.l-a1 { left: 723px; top: 565px; }
.l-a2 { left: 723px; top: 649px; }
.l-n2 { left: 601px; top: 811px; }
.l-s1 { left: 723px; top: 811px; }
.l-s2 { left: 723px; top: 920px; }
.note {
  position: absolute;
  font-family: Roboto, sans-serif;
  font-size: 62px;
  line-height: 70px;
  color: #1b69c9;
  white-space: nowrap;
}
.n-gioi { left: 731px; top: 427px; }
.n-cum { left: 949px; top: 427px; }
.n-lien { left: 138px; top: 650px; }
.n-as1 { left: 660px; top: 1167px; }
.n-as2 { left: 676px; top: 1261px; }
.n-as3 { left: 660px; top: 1355px; }
.typo {
  text-decoration: underline dashed #d9394e 6px;
  text-underline-offset: 11px;
}
.watermark {
  position: absolute;
  left: 755px;
  width: 2000px;
  top: 1514px;
  text-align: center;
  font-weight: bold;
  font-size: 68px;
  line-height: 76px;
  color: #c9c9c9;
}
.wm-sub {
  font-size: 67px;
}
.page-no {
  position: absolute;
  left: 3056px;
  top: 1539px;
  font-family: "Liberation Sans", sans-serif;
  font-size: 56px;
  line-height: 64px;
}
.ink {
  position: absolute;
  left: 0;
  top: 0;
  width: 3513px;
  height: 1807px;
  pointer-events: none;
}
.ink g {
  fill: none;
  stroke-linejoin: round;
  stroke-linecap: round;
}
.ink-yellow {
  stroke: #f5cf5c;
  stroke-width: 6;
}
.ink-green {
  stroke: #82ee55;
  stroke-width: 7;
}
.ink-thick {
  stroke-width: 11;
}
.text-box {
  position: absolute;
  left: 2189px;
  top: 1142px;
  width: 442px;
  height: 138px;
  box-sizing: border-box;
  border: solid #7b2fc4;
  border-width: 10px 7px;
  padding: 25px 0 0 13px;
  display: flex;
  align-items: flex-start;
  color: #1b69c9;
  font-family: Roboto, sans-serif;
  font-size: 63px;
  line-height: 70px;
}
.box-text {
  white-space: nowrap;
}
.caret {
  width: 2px;
  height: 70px;
  background: #1a4f96;
}
.box-close {
  position: absolute;
  left: -24px;
  top: -29px;
  width: 48px;
  height: 48px;
  border-radius: 50%;
  background: #e8732e;
  display: flex;
  align-items: center;
  justify-content: center;
}
.handle {
  position: absolute;
  width: 32px;
  height: 32px;
  border-radius: 50%;
  background: #7b2fc4;
}
.h-tr { right: -19px; top: -21px; }
.h-bl { left: -20px; bottom: -21px; }
.h-br { right: -19px; bottom: -21px; }

/* format toolbar */
.format-bar {
  position: absolute;
  left: 252px;
  top: 0;
  width: 3248px;
  height: 140px;
  box-sizing: border-box;
  padding-left: 58px;
  background: #fff;
  border: 1px solid #ccc;
  border-top: none;
  border-bottom-width: 3px;
  display: flex;
  align-items: center;
  color: #444;
  font-family: Roboto, sans-serif;
  z-index: 2;
}
.sel {
  display: flex;
  align-items: center;
  justify-content: space-between;
  box-sizing: border-box;
  font-size: 49px;
  padding-right: 68px;
}
.sel-font { width: 524px; }
.sel-size { width: 346px; }
.sel-line { width: 180px; padding-right: 29px; }
.fmt {
  width: 108.500px;
  height: 90px;
  flex: none;
  position: relative;
  display: flex;
  align-items: center;
  justify-content: center;
  font-size: 58px;
  line-height: 58px;
}
.f-b { font-weight: bold; font-family: "DejaVu Sans", sans-serif; font-size: 52px; }
.f-i { font-style: italic; font-family: "DejaVu Serif", serif; font-weight: bold; font-size: 50px; }
.f-u { text-decoration: underline 5px #999; text-underline-offset: 5px; font-size: 54px; }
.f-s { text-decoration: line-through 4px; font-weight: 500; color: #555; }
.f-a { color: #1b69c9; font-weight: bold; text-decoration: underline 7px #b3c8e6; text-underline-offset: 4px; font-size: 52px; }
.f-hatch {
  font-weight: bold;
  font-size: 52px;
  background: repeating-linear-gradient(-55deg, #666 0 2px, #fff 2px 6px) center / 56px 54px no-repeat;
}
.f-fill {
  width: 62px;
  height: 66px;
  margin-left: 22px;
}
.f-sub {
  font-weight: bold;
  font-family: "Liberation Sans", sans-serif;
  font-size: 62px;
}
.f-sub-low {
  padding-top: 14px;
  box-sizing: border-box;
}
.f-sub sub,
.f-sub sup {
  font-size: 24px;
}
.f-list {
  width: 50px;
  height: 46px;
}
.f-link {
  width: 60px;
  height: 60px;
  transform: rotate(55deg);
}
.f-div {
  font-size: 46px;
  padding-right: 24px;
  box-sizing: border-box;
}
.f-smile {
  width: 44px;
  height: 48px;
}
.f-clear {
  font-family: "Liberation Serif", serif;
  font-style: italic;
  font-weight: bold;
  font-size: 54px;
  text-decoration: underline 3px;
  text-underline-offset: 4px;
}
.f-clear small {
  font-size: 36px;
  font-style: normal;
  font-family: "Liberation Sans", sans-serif;
}
.f-micico {
  width: 28px;
  height: 56px;
  color: #111;
  margin-right: 10px;
}

/* text tool panel */
.text-panel {
  position: absolute;
  left: 0;
  top: 681px;
  width: 169px;
  height: 799px;
  background: #efefef;
  box-shadow: 1px 1px 3px rgba(0, 0, 0, 0.2);
  display: flex;
  flex-direction: column;
  z-index: 1;
}
.panel-size {
  height: 178px;
  box-sizing: border-box;
  border-bottom: 2px solid #777;
  padding: 40px 0 0 27px;
}
.size-drop {
  width: 112px;
  height: 103px;
  box-sizing: border-box;
  display: flex;
  align-items: center;
  justify-content: center;
  gap: 8px;
  border: 1px solid #c8c8c8;
  border-radius: 8px;
  background: linear-gradient(#fff, #f2f2f2 60%, #d5d5d5);
  color: #444;
  font-family: "DejaVu Sans", sans-serif;
  font-size: 40px;
}
.size-drop i {
  border-top: 12px solid #333;
  border-left: 12px solid transparent;
  border-right: 12px solid transparent;
}
.panel-colors {
  padding: 45px 0 0 20px;
  display: flex;
  flex-direction: column;
  align-items: center;
  width: 128px;
}
.dot {
  display: block;
  width: 108px;
  height: 105px;
  border-radius: 50%;
}
.dot-on {
  width: 128px;
  height: 128px;
  box-sizing: border-box;
  border: 11px solid #7b2fc9;
  background: #1b69c9;
  margin-bottom: 8px;
}
.dot-black {
  background: #000;
  margin-bottom: 22px;
}
.dot-red {
  background: #e0202f;
  margin-bottom: 65px;
}
.palette {
  width: 94px;
  height: 94px;
  color: #1c1c1e;
}

/* overlays */
.audio-pill {
  position: absolute;
  left: 1658px;
  top: 848px;
  width: 263px;
  height: 86px;
  box-sizing: border-box;
  padding: 0 38px 0 26px;
  border-radius: 43px;
  background: rgba(85, 85, 88, 0.82);
  color: #fff;
  display: flex;
  align-items: center;
  justify-content: space-between;
}
.pill-dim {
  color: #a9a9ab;
}
.page-pill {
  position: absolute;
  left: 3330px;
  top: 1654px;
  width: 354px;
  height: 100px;
  box-sizing: border-box;
  border-radius: 22px;
  background: #9a9a9a;
  color: #f4f4f4;
  display: flex;
  align-items: center;
  gap: 16px;
  padding-left: 24px;
  font-family: Roboto, sans-serif;
  font-weight: 500;
  font-size: 41px;
}
.page-input {
  width: 105px;
  height: 54px;
  background: #666;
  border: 1px solid #555;
  box-sizing: border-box;
  text-align: center;
  line-height: 52px;
  font-weight: normal;
}
.blob {
  position: absolute;
  left: 1845px;
  top: 1837px;
  width: 190px;
  height: 190px;
  border-radius: 50%;
  background: #dcdcdc;
}
.tile {
  position: absolute;
  left: 3550px;
  top: 1895px;
  width: 482px;
  height: 72px;
  box-sizing: border-box;
  border-radius: 14px;
  background: #4a4e51;
  display: flex;
  align-items: center;
  padding: 0 16px;
  font-size: 28px;
  z-index: 4;
}
.tile-mic {
  width: 48px;
  height: 48px;
  border-radius: 50%;
  background: #80868b;
  display: flex;
  align-items: center;
  justify-content: center;
}
.tile-cam {
  margin-left: 16px;
  color: #9aa0a6;
}
.tile-name {
  margin-left: 21px;
  flex: 1;
  letter-spacing: 0.7px;
}

/* meet bottom */
.meet-bottom {
  flex: 1;
  display: grid;
  grid-template-columns: 1fr auto 1fr;
  padding: 41px 48px 0 47px;
  align-items: flex-start;
}
.meeting-info {
  height: 80px;
  display: flex;
  align-items: center;
  gap: 26px;
  font-size: 30px;
  letter-spacing: 1px;
}
.meeting-code {
  letter-spacing: 2.8px;
}
.info-sep {
  width: 2px;
  height: 30px;
  background: #9aa0a6;
}
.controls {
  display: flex;
  gap: 24px;
}
.ctl {
  width: 80px;
  height: 80px;
  border-radius: 50%;
  background: #3c4043;
  display: flex;
  align-items: center;
  justify-content: center;
}
.ctl svg {
  width: 48px;
  height: 48px;
}
.ctl-red {
  background: #ea4335;
}
.ctl-end {
  width: 112px;
  border-radius: 40px;
  background: #ea4335;
}
.side-actions {
  height: 80px;
  display: flex;
  align-items: center;
  justify-content: flex-end;
  gap: 48px;
}
.side-ico {
  display: block;
  width: 48px;
  height: 48px;
}
.people {
  position: relative;
}
.people-count {
  position: absolute;
  left: 26px;
  top: -45px;
  width: 50px;
  height: 40px;
  border-radius: 20px;
  background: #5f6368;
  font-size: 24px;
  display: flex;
  align-items: center;
  justify-content: center;
}
```
